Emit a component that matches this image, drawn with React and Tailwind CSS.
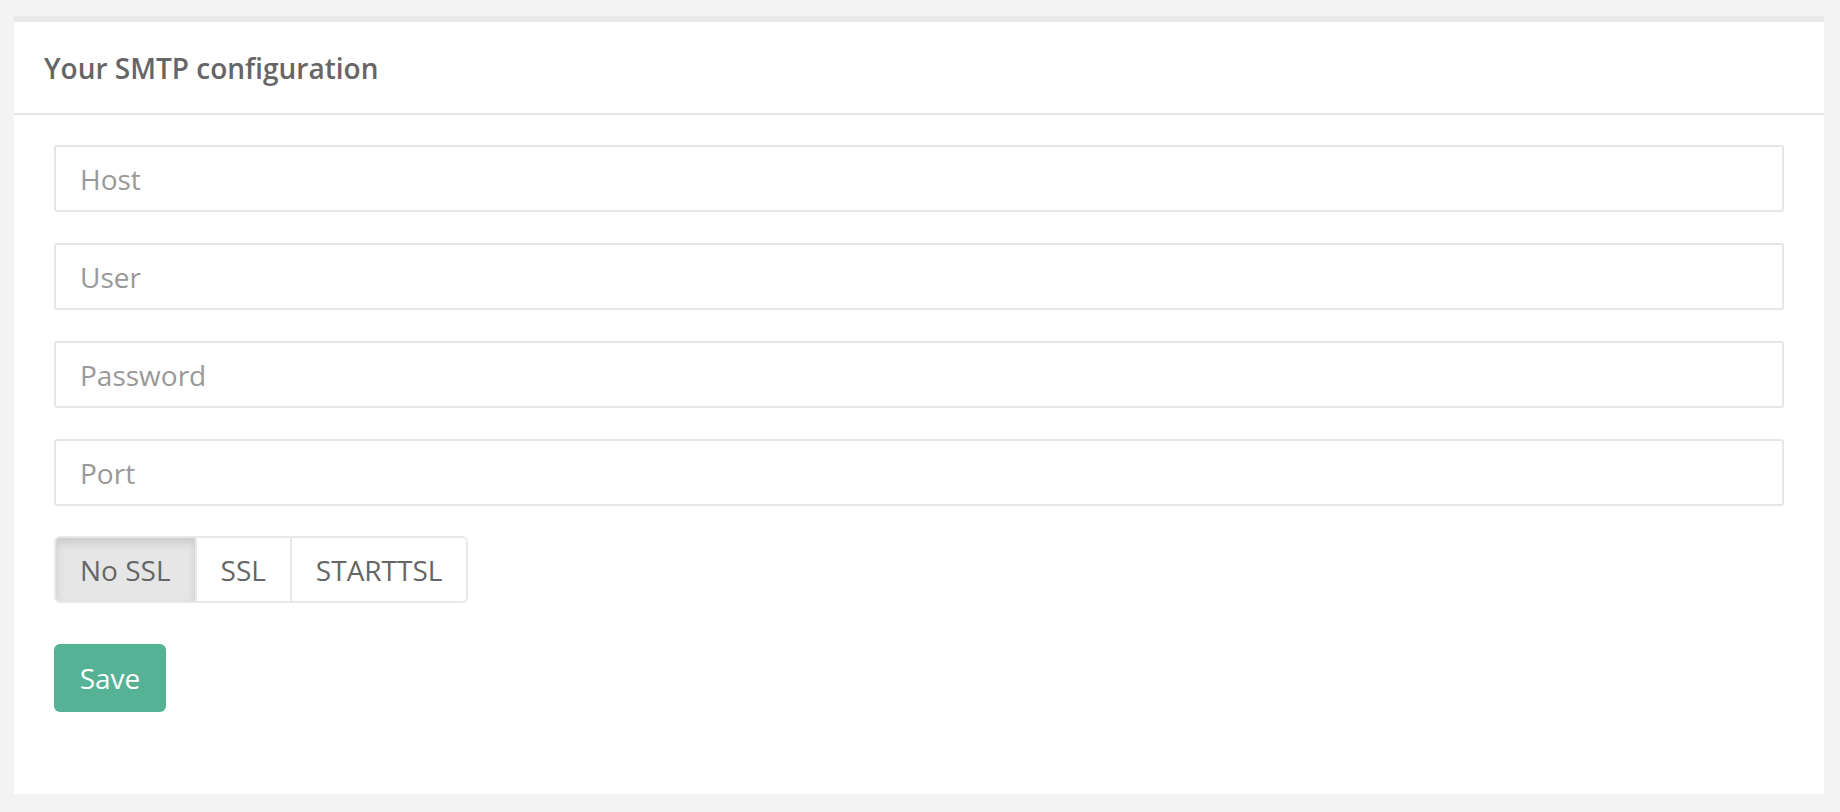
export default function App() {
  const fields = ['Host', 'User', 'Password', 'Port'];
  const modes = ['No SSL', 'SSL', 'STARTTSL'];

  return (
    <div className="min-h-[812px] bg-[#f3f3f3] pt-[16px] pb-[20px] pl-[14px] pr-[16px]" style={{ fontFamily: '"Open Sans", "Liberation Sans", sans-serif' }}>
      <div className="bg-white border-t-[6px] border-[#e7e8ea]">
        {/* Heading */}
        <div className="h-[93px] flex items-center px-[30px] border-b-2 border-[#e7e7e7]">
          <h2 className="text-[28px] font-semibold text-[#666666]">Your SMTP configuration</h2>
        </div>

        {/* Form */}
        <div className="px-[40px] pt-[30px] pb-[82px]">
          <div className="flex flex-col gap-[31px]">
            {fields.map((f) => (
              <input
                key={f}
                type={f === 'Password' ? 'password' : 'text'}
                placeholder={f}
                className="h-[67px] w-full border-2 border-[#e6e6e6] rounded-[3px] px-[24px] text-[28px] text-[#555] placeholder:text-[#999999] outline-none"
              />
            ))}
          </div>

          <div className="mt-[30px] inline-flex h-[67px] border-2 border-[#e8e8e8] rounded-[6px] overflow-hidden">
            {modes.map((m, i) => (
              <button
                key={m}
                className={
                  i === 0
                    ? 'px-[24px] text-[28px] text-[#666] bg-[#e6e6e6] shadow-[inset_0_5px_8px_rgba(0,0,0,0.12)]'
                    : 'px-[24px] text-[28px] text-[#666] bg-white border-l-2 border-[#e8e8e8]'
                }
              >
                {m}
              </button>
            ))}
          </div>

          <div className="mt-[41px]">
            <button className="h-[68px] w-[112px] rounded-[6px] bg-[#55b295] text-white text-[28px]">Save</button>
          </div>
        </div>
      </div>
    </div>
  );
}
